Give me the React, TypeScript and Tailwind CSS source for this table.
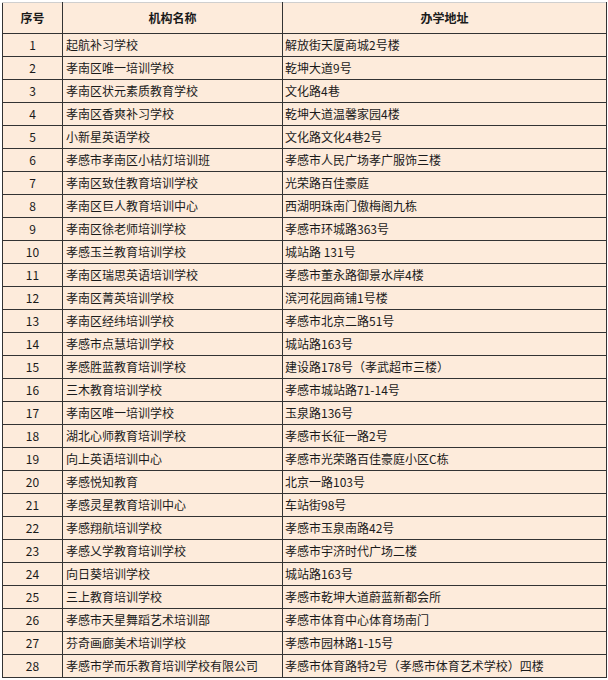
const rows: [string, string][] = [
  ["起航补习学校", "解放街天厦商城2号楼"],
  ["孝南区唯一培训学校", "乾坤大道9号"],
  ["孝南区状元素质教育学校", "文化路4巷"],
  ["孝南区香爽补习学校", "乾坤大道温馨家园4楼"],
  ["小新星英语学校", "文化路文化4巷2号"],
  ["孝感市孝南区小桔灯培训班", "孝感市人民广场孝广服饰三楼"],
  ["孝南区致佳教育培训学校", "光荣路百佳豪庭"],
  ["孝南区巨人教育培训中心", "西湖明珠南门傲梅阁九栋"],
  ["孝南区徐老师培训学校", "孝感市环城路363号"],
  ["孝感玉兰教育培训学校", "城站路 131号"],
  ["孝南区瑞思英语培训学校", "孝感市董永路御景水岸4楼"],
  ["孝南区菁英培训学校", "滨河花园商铺1号楼"],
  ["孝南区经纬培训学校", "孝感市北京二路51号"],
  ["孝感市点慧培训学校", "城站路163号"],
  ["孝感胜蓝教育培训学校", "建设路178号（孝武超市三楼）"],
  ["三木教育培训学校", "孝感市城站路71-14号"],
  ["孝南区唯一培训学校", "玉泉路136号"],
  ["湖北心师教育培训学校", "孝感市长征一路2号"],
  ["向上英语培训中心", "孝感市光荣路百佳豪庭小区C栋"],
  ["孝感悦知教育", "北京一路103号"],
  ["孝感灵星教育培训中心", "车站街98号"],
  ["孝感翔航培训学校", "孝感市玉泉南路42号"],
  ["孝感乂学教育培训学校", "孝感市宇济时代广场二楼"],
  ["向日葵培训学校", "城站路163号"],
  ["三上教育培训学校", "孝感市乾坤大道蔚蓝新都会所"],
  ["孝感市天星舞蹈艺术培训部", "孝感市体育中心体育场南门"],
  ["芬奇画廊美术培训学校", "孝感市园林路1-15号"],
  ["孝感市学而乐教育培训学校有限公司", "孝感市体育路特2号（孝感市体育艺术学校）四楼"],
];

export default function App() {
  return (
    <div
      className="w-[608px] h-[680px] bg-white pt-[2px] pl-[2px] text-[12px] text-[#1a1a1a]"
      style={{ fontFamily: '"Noto Sans CJK SC", "Noto Sans", sans-serif' }}
    >
      <table className="w-[604px] border-collapse table-fixed bg-[#fdebdb]">
        <colgroup>
          <col className="w-[60px]" />
          <col className="w-[220px]" />
          <col className="w-[324px]" />
        </colgroup>
        <thead>
          <tr className="h-[31px]">
            <th className="border border-[#333] border-t-[#cfcfcf] font-bold text-center p-0">序号</th>
            <th className="border border-[#333] border-t-[#cfcfcf] font-bold text-center p-0">机构名称</th>
            <th className="border border-[#333] border-t-[#cfcfcf] font-bold text-center p-0">办学地址</th>
          </tr>
        </thead>
        <tbody>
          {rows.map(([name, addr], i) => (
            <tr key={i} className="h-[23px]">
              <td className="border border-[#333] text-center p-0 leading-none">{i + 1}</td>
              <td className="border border-[#333] px-[3px] py-0 leading-none whitespace-nowrap">{name}</td>
              <td className="border border-[#333] px-[2px] py-0 leading-none whitespace-nowrap">{addr}</td>
            </tr>
          ))}
        </tbody>
      </table>
    </div>
  );
}
